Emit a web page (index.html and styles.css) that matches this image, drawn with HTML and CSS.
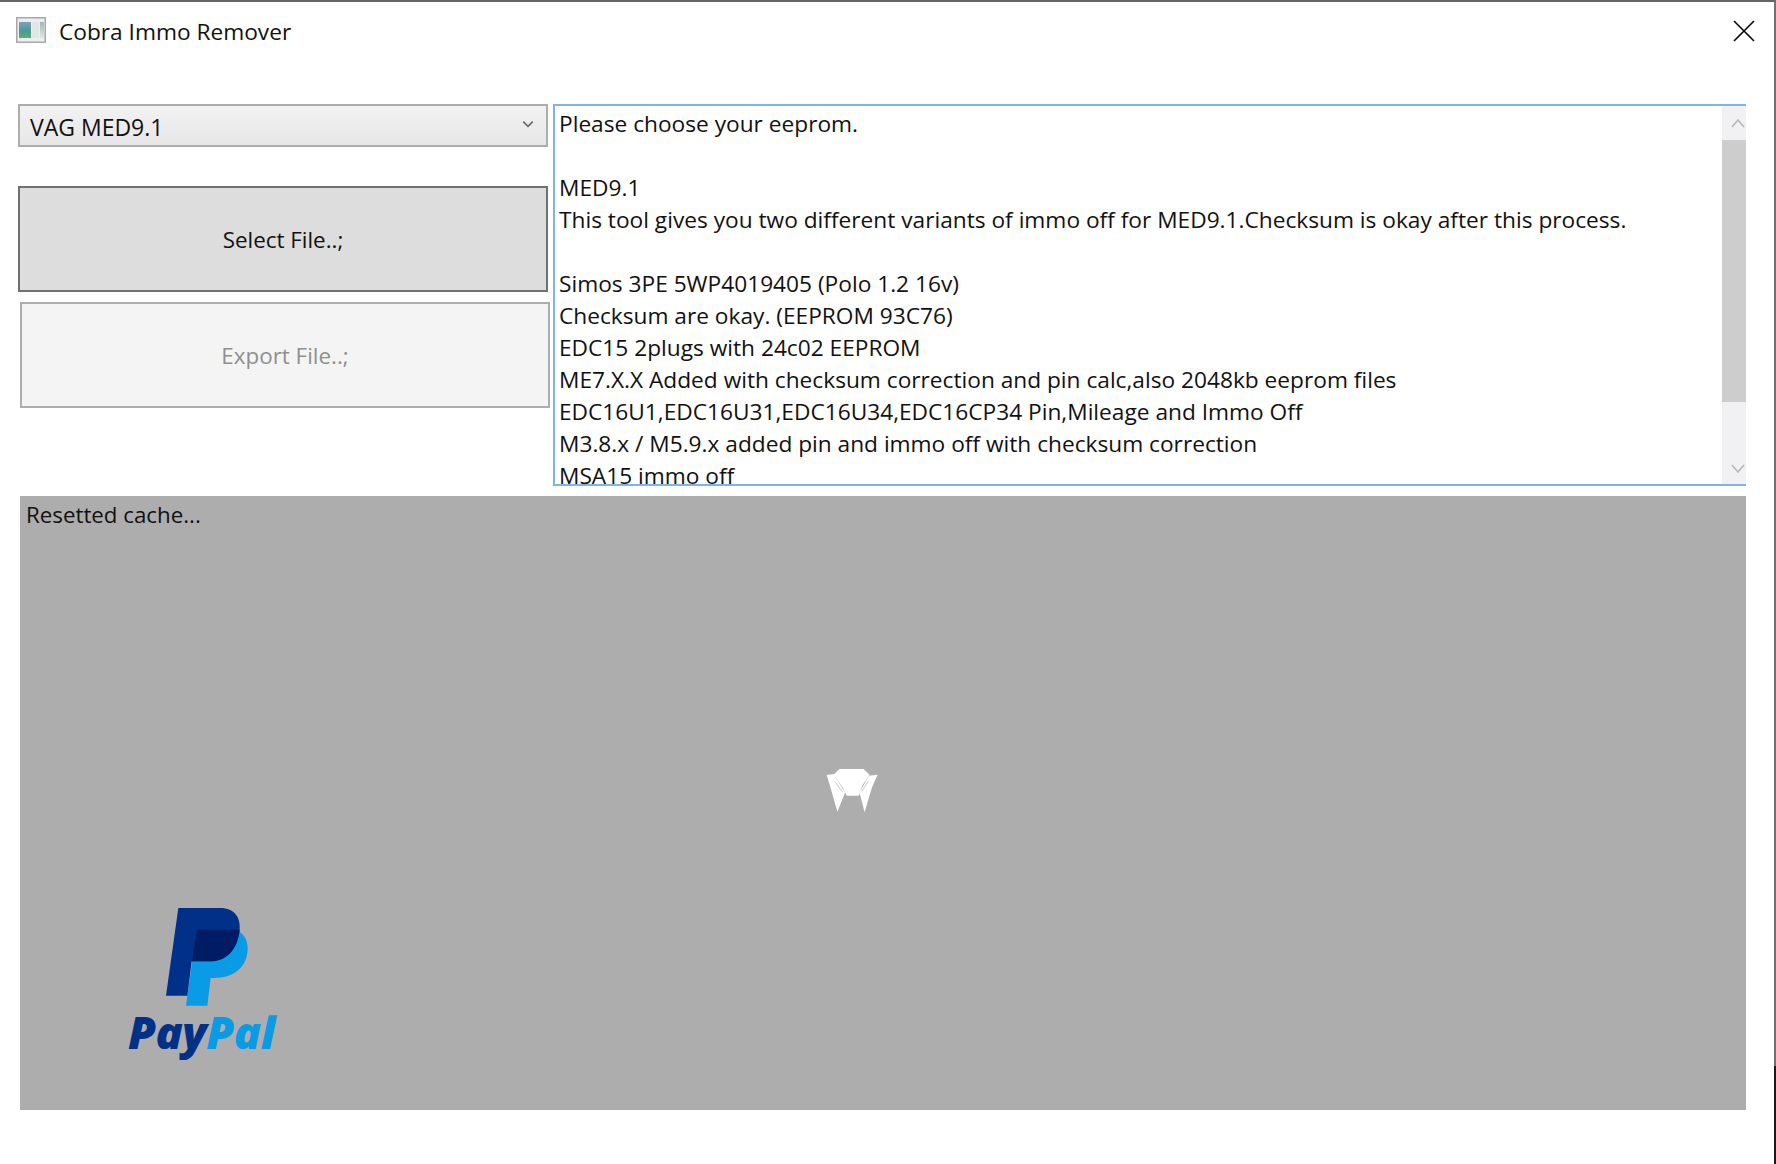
FILE: index.html
```html
<!DOCTYPE html>
<html lang="en">
<head>
<meta charset="utf-8">
<title>Cobra Immo Remover</title>
<link rel="stylesheet" href="styles.css">
</head>
<body>
<div class="window">
  <header class="titlebar">
    <svg class="app-icon" viewBox="0 0 30 26" aria-hidden="true">
      <defs>
        <linearGradient id="pane" x1="0" y1="0" x2="0" y2="1">
          <stop offset="0" stop-color="#7f9fc0"/>
          <stop offset="0.55" stop-color="#4a9a92"/>
          <stop offset="1" stop-color="#58b07c"/>
        </linearGradient>
        <linearGradient id="side" x1="0" y1="0" x2="0" y2="1">
          <stop offset="0" stop-color="#9fb4c4"/>
          <stop offset="1" stop-color="#d8efd8"/>
        </linearGradient>
      </defs>
      <rect x="0.75" y="0.75" width="28.5" height="24.5" fill="#eceded" stroke="#a8a8a8" stroke-width="1.5"/>
      <rect x="3" y="5" width="12" height="16" fill="url(#pane)"/>
      <rect x="16" y="5" width="7" height="16" fill="#e4e4e4"/>
      <rect x="24" y="5" width="4" height="16" fill="url(#side)"/>
    </svg>
    <span class="title">Cobra Immo Remover</span>
    <svg class="close" viewBox="0 0 22 22" aria-hidden="true">
      <path d="M1 1 21 21M21 1 1 21" stroke="#000" stroke-width="1.6" fill="none"/>
    </svg>
  </header>
  <main class="content">
    <div class="top">
      <div class="controls">
        <div class="combo">
          <span class="combo-label">VAG MED9.1</span>
          <svg class="combo-arrow" viewBox="0 0 10 6" aria-hidden="true"><path d="M1 1 5 5 9 1" stroke="#666" stroke-width="1.3" fill="none"/></svg>
        </div>
        <button class="btn btn-select" type="button">Select File..;</button>
        <button class="btn btn-export" type="button" disabled>Export File..;</button>
      </div>
      <div class="textbox">
        <div class="text-lines">
          <p>Please choose your eeprom.</p>
          <p>&nbsp;</p>
          <p>MED9.1</p>
          <p>This tool gives you two different variants of immo off for MED9.1.Checksum is okay after this process.</p>
          <p>&nbsp;</p>
          <p>Simos 3PE 5WP4019405 (Polo 1.2 16v)</p>
          <p>Checksum are okay. (EEPROM 93C76)</p>
          <p>EDC15 2plugs with 24c02 EEPROM</p>
          <p>ME7.X.X Added with checksum correction and pin calc,also 2048kb eeprom files</p>
          <p>EDC16U1,EDC16U31,EDC16U34,EDC16CP34 Pin,Mileage and Immo Off</p>
          <p>M3.8.x / M5.9.x added pin and immo off with checksum correction</p>
          <p>MSA15 immo off</p>
        </div>
        <div class="scrollbar">
          <svg class="sb-arrow" viewBox="0 0 14 10" aria-hidden="true"><path d="M1 9 7 2 13 9" stroke="#b8b8b8" stroke-width="1.6" fill="none"/></svg>
          <div class="sb-thumb"></div>
          <svg class="sb-arrow sb-arrow-down" viewBox="0 0 14 10" aria-hidden="true"><path d="M1 1 7 8 13 1" stroke="#b8b8b8" stroke-width="1.6" fill="none"/></svg>
        </div>
      </div>
    </div>
    <section class="panel">
      <div class="log">Resetted cache...</div>
      <svg class="spinner" viewBox="78 52 158 134" aria-hidden="true">
        <path fill="#fff" d="M100 72 118 55H190L208 72 186 105 176 135H140L128 110Z"/>
        <path fill="#fff" d="M80 73 100 70 135 125 112 182 92 112Z"/>
        <path fill="#fff" d="M232 72 206 75 178 125 193 184 215 110Z"/>
        <path fill="none" stroke="#adadad" stroke-width="2" d="M104 92 128 124M204 92 184 122"/>
      </svg>
      <div class="paypal">
        <svg class="pp-mark" viewBox="195 82 252 300" aria-hidden="true">
          <path fill="#0a9be6" d="M290 150H400C435 155 450 190 440 230 430 270 395 295 345 295H332L322 378H258Z"/>
          <path fill="#003087" d="M235 85H360C405 85 425 115 418 160 410 215 375 245 330 245H275L262 348H198Z"/>
          <path fill="#001c64" d="M290 150H419C410 215 375 245 330 245H276Z"/>
        </svg>
        <div class="pp-text"><span class="pp-dark">Pay</span><span class="pp-light">Pal</span></div>
      </div>
    </section>
  </main>
</div>
</body>
</html>
```
FILE: styles.css
```css
* { box-sizing: border-box; }
html, body { margin: 0; height: 100%; background: #fff; }
body { overflow: hidden; }
.window {
  position: relative;
  width: 1776px;
  height: 1164px;
  background: #fff;
  border-top: 2px solid #666;
  border-right: 2px solid #707070;
  font-family: "Open Sans", "Noto Sans", sans-serif;
  color: #111;
  display: flex;
  flex-direction: column;
}
.window::after {
  content: "";
  position: absolute;
  right: -2px;
  top: 1064px;
  bottom: 0;
  width: 2px;
  background: #1a1a1a;
}
.titlebar {
  height: 102px;
  flex: none;
  display: flex;
  align-items: flex-start;
  padding: 15px 19px 0 16px;
}
.app-icon { width: 30px; height: 26px; flex: none; }
.title { font-size: 22.7px; line-height: 28px; margin: 1px 0 0 13px; }
.close { width: 22px; height: 22px; margin-left: auto; margin-top: 3px; }
.content { padding: 0 28px 0 18px; display: flex; flex-direction: column; }
.top { display: flex; height: 382px; }
.controls { width: 535px; flex: none; display: flex; flex-direction: column; }
.combo {
  width: 530px;
  height: 43px;
  border: 2px solid #adadad;
  background: linear-gradient(#f2f2f2, #e7e7e7);
  display: flex;
  align-items: center;
  justify-content: space-between;
  padding: 0 12px 0 10px;
  font-size: 23px;
}
.combo-label { margin-top: 2px; }
.combo-arrow { width: 12px; height: 8px; margin-bottom: 4px; }
.btn {
  width: 530px;
  height: 106px;
  font-family: inherit;
  font-size: 22.4px;
  padding: 0;
  display: block;
}
.btn-select {
  margin-top: 39px;
  background: #ddd;
  border: 2px solid #707070;
  color: #111;
}
.btn-export {
  margin: 10px 0 0 2px;
  background: #f4f4f4;
  border: 2px solid #adadad;
  color: #8f8f8f;
}
.textbox {
  flex: 1;
  min-width: 0;
  border-top: 2px solid #7eb4ea;
  border-bottom: 2px solid #7eb4ea;
  border-left: 2px solid #7eb4ea;
  display: flex;
  background: #fff;
  overflow: hidden;
}
.text-lines { flex: 1; min-width: 0; padding: 2px 0 0 4px; overflow: hidden; font-size: 22.7px; line-height: 32px; }
.text-lines p { margin: 0; white-space: nowrap; }
.scrollbar { width: 24px; flex: none; background: #f1f0f2; display: flex; flex-direction: column; }
.sb-arrow { width: 14px; height: 10px; margin: 12px 0 12px 9px; flex: none; }
.sb-arrow-down { margin-top: auto; margin-bottom: 10px; }
.sb-thumb { width: 24px; height: 262px; background: #cdcdcd; flex: none; }
.panel {
  margin: 10px 0 0 2px;
  height: 614px;
  background: #adadad;
  display: flex;
  flex-direction: column;
}
.log { font-size: 22.3px; line-height: 28px; padding: 5px 0 0 6px; color: #111; }
.spinner { width: 53px; height: 45px; margin: 239px 0 0 806px; flex: none; }
.paypal { margin: 94px 0 0 108px; width: 170px; }
.pp-mark { width: 84px; height: 100px; display: block; margin-left: 37px; }
.pp-text {
  font-family: "Open Sans", sans-serif;
  font-style: italic;
  font-weight: 800;
  font-size: 45px;
  line-height: 48px;
  letter-spacing: -0.5px;
  margin-top: 1px;
}
.pp-dark { color: #003087; }
.pp-light { color: #0a9be6; }
```
